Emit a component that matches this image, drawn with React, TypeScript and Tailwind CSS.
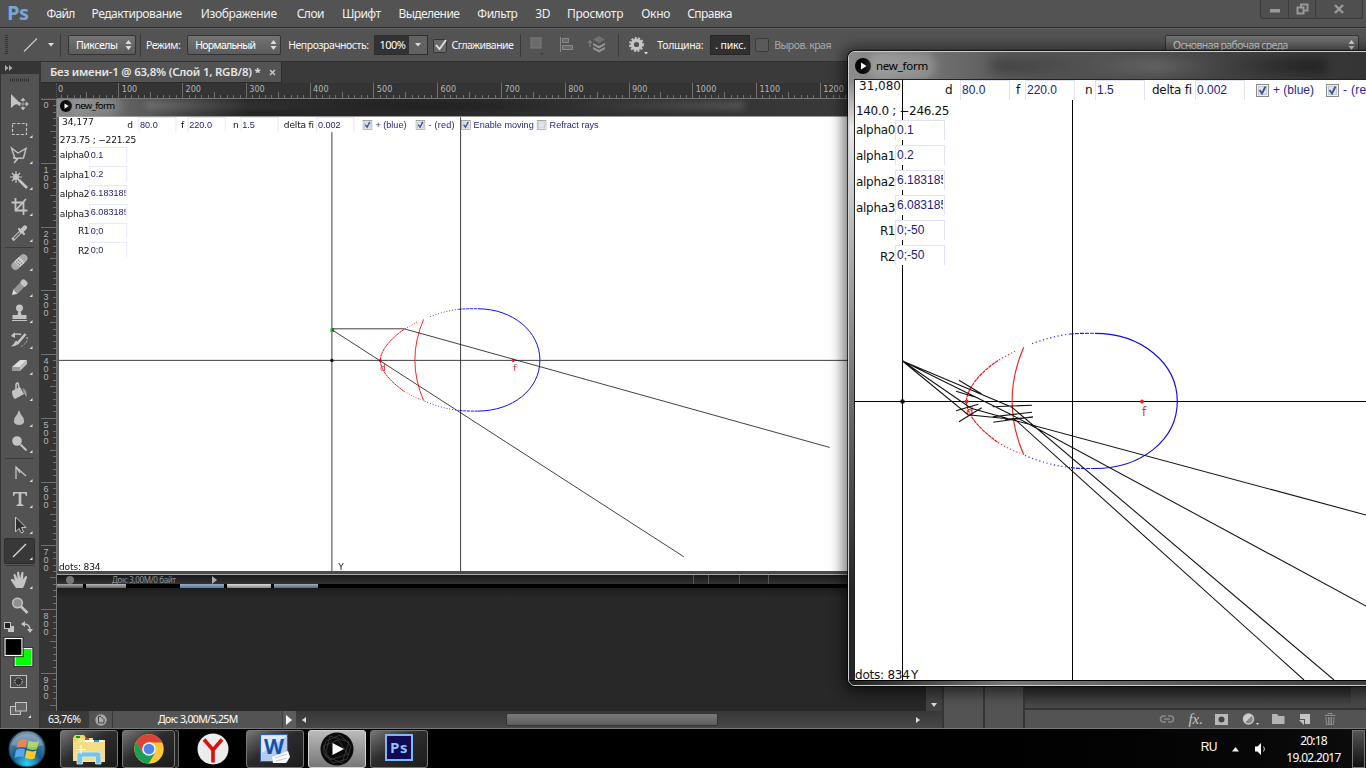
import React, { useLayoutEffect, useRef, useState } from "react";

/* Text spread to a known width through letter spacing. */
function T({ w, className = "", children }: { w: number; className?: string; children: string }) {
  const ref = useRef<HTMLSpanElement>(null);
  const [ls, setLs] = useState(0);
  useLayoutEffect(() => {
    if (ref.current) setLs((w - ref.current.offsetWidth) / children.length);
  }, []);
  return (
    <span ref={ref} className={"inline-block shrink-0 whitespace-pre " + className} style={{ letterSpacing: ls + "px" }}>
      {children}
    </span>
  );
}

const menu: [string, number, string][] = [
  ["Файл", 28, "ml-[18px]"],
  ["Редактирование", 90, "ml-[17px]"],
  ["Изображение", 76, "ml-[19px]"],
  ["Слои", 27, "ml-[20px]"],
  ["Шрифт", 38, "ml-[18px]"],
  ["Выделение", 61, "ml-[18px]"],
  ["Фильтр", 40, "ml-[18px]"],
  ["3D", 15, "ml-[18px]"],
  ["Просмотр", 56, "ml-[17px]"],
  ["Окно", 29, "ml-[18px]"],
  ["Справка", 45, "ml-[17px]"],
];

function MenuBar() {
  return (
    <div className="flex h-7 shrink-0 items-center border-b border-[#2c2c2c] bg-[#535353] text-[12px] text-[#f0f0f0]">
      <T w={22} className="ml-[7px] -mt-[2px] font-['Open_Sans'] text-[20px] leading-6 font-bold text-[#77a7d6]">Ps</T>
      {menu.map(([t, w, m]) => (
        <T key={t} w={w} className={m}>{t}</T>
      ))}
      <div className="mr-[3px] ml-auto flex h-[19px] self-start rounded-b-[3px] border border-t-0 border-[#3a3a3a] bg-[#4f4f4f]">
        <div className="flex w-[28px] items-center justify-center border-r border-[#3d3d3d]">
          <svg width="12" height="12"><rect x="1" y="6" width="10" height="3.5" fill="#999" /></svg>
        </div>
        <div className="flex w-[27px] items-center justify-center border-r border-[#3d3d3d]">
          <svg width="13" height="12" fill="none" stroke="#999" strokeWidth="2"><path d="M5 4V1.5H11.5V7.5H8M1.5 4.5H7.5V10.5H1.5Z" /></svg>
        </div>
        <div className="flex w-[46px] items-center justify-center">
          <svg width="12" height="12" stroke="#999" strokeWidth="2.4"><path d="M2 2L10 10M10 2L2 10" /></svg>
        </div>
      </div>
    </div>
  );
}

const UpDown = ({ className = "" }: { className?: string }) => (
  <svg className={className} width="7" height="10" fill="#ddd"><path d="M3.500 0L6.500 4H.5ZM3.500 10L.5 6H6.500Z" /></svg>
);
const Sep = ({ className }: { className: string }) => <div className={"h-[23px] w-px shrink-0 bg-[#3a3a3a] " + className} />;
const combo = "flex h-5 shrink-0 items-center rounded-[2px] border border-[#333] bg-linear-to-b from-[#737373] to-[#5b5b5b] text-white";

function OptionsBar() {
  return (
    <div className="flex h-[34px] shrink-0 items-center border-t border-b border-t-[#646464] border-b-[#303030] bg-[#535353] text-[10.5px] text-[#f4f4f4]">
      <svg className="ml-[5px] shrink-0" width="3" height="20" stroke="#333"><path d="M1.500 0V20" strokeWidth="3" strokeDasharray="1 1" /></svg>
      <svg className="ml-[15px] shrink-0" width="15" height="14" stroke="#c8c8c8" strokeWidth="1.300"><path d="M1 13.500L14 .5" /></svg>
      <svg className="ml-[10px] shrink-0" width="6" height="4" fill="#ddd"><path d="M0 0H6L3 3.500Z" /></svg>
      <Sep className="ml-[6px]" />
      <div className={combo + " ml-[7px] w-[68px]"}>
        <T w={42} className="ml-[7px]">Пикселы</T>
        <UpDown className="ml-[7px]" />
      </div>
      <Sep className="ml-[4px]" />
      <T w={34} className="ml-[5px]">Режим:</T>
      <div className={combo + " ml-[7px] w-[94px]"}>
        <T w={60} className="ml-[7px]">Нормальный</T>
        <UpDown className="ml-[15px]" />
      </div>
      <T w={80} className="ml-[7px]">Непрозрачность:</T>
      <div className="ml-[6px] flex h-5 w-[54px] shrink-0 items-center border border-[#2e2e2e] bg-[#323232] text-white">
        <T w={26} className="ml-[4px] text-[11px]">100%</T>
        <div className="ml-auto flex h-full w-[18px] items-center justify-center bg-[#626262]">
          <svg width="6" height="4" fill="#ddd"><path d="M0 0H6L3 3.500Z" /></svg>
        </div>
      </div>
      <svg className="ml-[5px] shrink-0" width="15" height="17" fill="none">
        <rect x=".5" y="2.500" width="13" height="13" rx="1" fill="#686868" stroke="#333" />
        <path d="M3 8L6.500 12L13 3" stroke="#e4e4e4" strokeWidth="1.800" />
      </svg>
      <T w={62} className="ml-[3px]">Сглаживание</T>
      <Sep className="ml-[7px]" />
      <svg className="ml-[8px] shrink-0" width="16" height="20"><rect x="2" y="3" width="10" height="10" fill="#6b6b6b" stroke="#7c7c7c" /><path d="M11 18H15L13 20Z" fill="#404040" /></svg>
      <svg className="ml-[13px] shrink-0" width="18" height="20" fill="#6a6a6a" stroke="#8a8a8a"><path d="M2.500 2V17" /><path d="M4.500 3.500H10.500V7.500H4.500ZM4.500 10.500H14.500V14.500H4.500Z" /></svg>
      <svg className="ml-[11px] shrink-0" width="20" height="20"><path d="M3 12V6M1 8L3 5.500L5 8" fill="none" stroke="#888" /><path d="M12 1L18 4.500L12 8L6 4.500Z" fill="#707070" /><path d="M6 8L12 11L18 8V10L12 13.500L6 10ZM6 12L12 15L18 12V14L12 17.500L6 14Z" fill="#949494" /></svg>
      <Sep className="ml-[11px]" />
      <svg className="ml-[9px] shrink-0" width="22" height="20">
        <circle cx="8.500" cy="9.500" r="4.300" fill="none" stroke="#c5c5c5" strokeWidth="3.400" />
        <circle cx="8.500" cy="9.500" r="6.500" fill="none" stroke="#c5c5c5" strokeWidth="2" strokeDasharray="2 1.500" />
        <path d="M16 17H20L18 19.500Z" fill="#ddd" />
      </svg>
      <T w={46} className="ml-[7px]">Толщина:</T>
      <div className="ml-[7px] flex h-5 w-[40px] shrink-0 items-center border border-[#262626] bg-[#303030]">
        <T w={31} className="ml-[4px] text-white">. пикс.</T>
      </div>
      <div className="ml-[5px] h-[14px] w-[14px] shrink-0 rounded-[2px] border border-[#3b3b3b] bg-[#5a5a5a]" />
      <T w={57} className="ml-[5px] text-[#a8a8a8]">Выров. края</T>
      <div className={combo + " mr-[7px] ml-auto w-[194px]"}>
        <T w={115} className="ml-[7px] text-[#ddd]">Основная рабочая среда</T>
        <UpDown className="mr-[3px] ml-auto" />
      </div>
    </div>
  );
}

const g = "#c4c4c4";
const tools: React.ReactNode[] = [
  <><path d="M3 3V17L7 13.500L13 13Z" fill={g} /><path d="M15 8V18M10 13H20M15 7L13 9.500H17ZM15 19L13 16.500H17ZM9.500 13L12 11V15ZM20.500 13L18 11V15Z" fill={g} stroke={g} strokeWidth=".6" /></>,
  <rect x="4.500" y="6.500" width="14" height="11" fill="none" stroke={g} strokeWidth="1.200" strokeDasharray="3 1.600" />,
  <><path d="M3.500 5L10 10L18 5.500L15.500 15L7 15.500Z" fill="none" stroke={g} strokeWidth="1.400" /><path d="M5 14.500L9.500 16L6 20" fill="none" stroke={g} strokeWidth="1.600" /></>,
  <><path d="M11 11L19 19" stroke={g} strokeWidth="2.600" /><path d="M8 2V14M2 8H14M4 4L12 12M12 4L4 12" stroke={g} strokeWidth="1.200" /><circle cx="8" cy="8" r="3" fill={g} /></>,
  <><path d="M7.500 3V15.500H19.500M3.500 7.500H15.500V20M7.500 15.500L18 4" fill="none" stroke={g} strokeWidth="1.800" /></>,
  <><path d="M4.500 19L12.500 11" stroke={g} strokeWidth="3.200" /><path d="M6 17.500L12 11.500" stroke="#5a5a5a" strokeWidth="1.400" /><path d="M11 8L16 13" stroke={g} strokeWidth="2.200" strokeLinecap="round" /><path d="M13.500 10L17 6.500" stroke={g} strokeWidth="4.400" strokeLinecap="round" /></>,
  <g transform="rotate(-43 11.500 12)"><rect x="2" y="8" width="19" height="8" rx="4" fill="#aaa" /><rect x="8" y="8" width="7" height="8" fill="#ccc" /><path d="M9 10H14M9 12H14M9 14H14" stroke="#555" strokeDasharray="1 1.500" /></g>,
  <g transform="rotate(-45 11 12)"><path d="M1 12L6 9V15Z" fill="#ddd" /><rect x="6" y="9" width="9" height="6" fill="#969696" /><rect x="15" y="8.500" width="6" height="7" rx="2" fill={g} /></g>,
  <><circle cx="11.500" cy="6" r="3.500" fill={g} /><path d="M10.500 8H12.500L13.500 13H18.500V17H4.500V13H9.500Z" fill={g} /><path d="M4 18.500H19" stroke={g} /></>,
  <><path d="M9 16L17.500 6" stroke={g} strokeWidth="2.600" /><path d="M3 18.500Q8 18.500 11 15L8 12.500Q6 16 3 18.500Z" fill={g} /><path d="M4 7.500Q8 5 13 6.500" fill="none" stroke={g} strokeWidth="1.500" /><path d="M3 8L7 4V10Z" fill={g} /><path d="M19 9Q20 15 13 18.500" fill="none" stroke={g} strokeDasharray="2 1.500" /></>,
  <><path d="M4 13L12 6H19L12 13Z" fill="#ddd" /><path d="M4 13H12V17H4Z" fill="#999" /><path d="M12 13L19 6V10L12 17Z" fill="#c0c0c0" /></>,
  <><path d="M4 11L12 7L16 14L7 19Q4 17 4 11Z" fill={g} /><path d="M8 12V5Q8 2.500 10 3L11 8" fill="none" stroke={g} strokeWidth="1.500" /><path d="M14 8Q19 9 19 17Q16 15 15 10Z" fill="#999" /></>,
  <path d="M11 4Q12 8 15.500 12Q18 19 11 19Q4 19 6.500 12Q10 8 11 4Z" fill="#bcbcbc" />,
  <><circle cx="9" cy="9" r="4.800" fill={g} /><path d="M12.500 12.500L18.500 18.500" stroke={g} strokeWidth="2" /></>,
  <><path d="M8 18V6L18 15M8 6L12 12" fill="none" stroke={g} strokeWidth="1.300" /></>,
  <><path d="M5 5H19V9H18L17 6.500H13.300V17L15.500 18V19H8.500V18L10.700 17V6.500H7L6 9H5Z" fill={g} /></>,
  <path d="M7.500 4V19L11 15.500L13.500 20L15.500 19L13.500 14.500H18Z" fill="#303030" stroke={g} />,
  <path d="M5 18L18 5" stroke="#ddd" strokeWidth="1.300" />,
  <path d="M8 20L3 12.500Q2.500 10 5 11L7 13L5.500 7Q6 5 7.500 6.500L9.500 11L9 4.500Q10 2.500 11.200 4.500L12 10.500L13.500 4.500Q15 3 15.500 5L15 11.500L17.500 8Q19.500 7.500 19 9.500L16.500 17L15 20Z" fill={g} />,
  <><circle cx="9.500" cy="9" r="4.800" fill="#8f8f8f" stroke={g} strokeWidth="1.500" /><path d="M13 12.500L19.500 19" stroke={g} strokeWidth="2.600" /></>,
];

function Tool({ i }: { i: number }) {
  const sel = i === 17;
  return (
    <div className={"-ml-px flex h-[26px] w-[31px] shrink-0 items-center justify-center rounded-[2px] " + (sel ? "border border-[#2e2e2e] bg-[#383838]" : "")}>
      <svg width="29" height="24" viewBox="-3 0 29 24" className="shrink-0">
        {tools[i]}
        {i !== 0 && i !== 19 && <path d="M24.500 18V21H21.500Z" fill="#ddd" />}
      </svg>
    </div>
  );
}

function Toolbar() {
  const range = (a: number, b: number) => Array.from({ length: b - a }, (_, k) => <Tool key={a + k} i={a + k} />);
  const line = <div className="my-px h-px w-[29px] shrink-0 bg-[#3b3b3b]" />;
  return (
    <div className="flex w-[39px] shrink-0 flex-col items-center border-l border-[#333] bg-[#535353] pr-px">
      <div className="-mr-px flex h-[12px] w-[38px] shrink-0 items-center bg-[#353535] pl-1">
        <svg width="8" height="6" fill="#aaa"><path d="M0 0L3.500 3L0 6ZM4 0L7.500 3L4 6Z" /></svg>
      </div>
      <svg className="mt-[4px] shrink-0" width="20" height="4"><path d="M0 2H20" stroke="#2e2e2e" strokeWidth="3" strokeDasharray="1 1" /></svg>
      <div className="h-[8px] shrink-0" />
      {range(0, 6)}
      {line}
      {range(6, 14)}
      {line}
      {range(14, 18)}
      {line}
      {range(18, 20)}
      <svg width="38" height="110" className="mt-px -ml-px shrink-0">
        <rect x="8" y="6" width="6" height="6" fill={g} /><rect x="4.500" y="2.500" width="6" height="6" fill="#222" stroke={g} />
        <path d="M24 4Q30 4 30 10" fill="none" stroke={g} strokeWidth="1.300" /><path d="M21 4L25 1V7ZM30 13L27 9H33Z" fill={g} />
        <rect x="15" y="28.500" width="17" height="17" fill="#0f0" stroke="#fff" /><rect x="14" y="27.500" width="19" height="19" fill="none" stroke="#333" />
        <rect x="5" y="18.500" width="17" height="17" fill="#000" stroke="#fff" strokeWidth="1.200" /><rect x="3.800" y="17.300" width="19.400" height="19.400" fill="none" stroke="#333" />
        <rect x="10.500" y="55.500" width="16" height="12" fill="#4a4a4a" stroke={g} /><circle cx="18.500" cy="61.500" r="3.700" fill="#333" stroke="#eee" strokeDasharray="1 1" />
        <rect x="10.500" y="86.500" width="10" height="8" fill="#666" stroke={g} /><rect x="15.500" y="82.500" width="11" height="8.500" fill="#666" stroke={g} />
        <path d="M31 95V98H28Z" fill="#ddd" />
      </svg>
    </div>
  );
}

const ticks = (n: number, start: number) => Array.from({ length: n }, (_, k) => Math.round(start + k * 6.377) + 0.5);

function RulerTop() {
  return (
    <svg width="870" height="16" className="block shrink-0 bg-[#343434]" shapeRendering="crispEdges">
      {ticks(128, -2.4).map((x, k) => (
        <path key={k} d={"M" + x + " 15V" + (k % 10 === 0 ? 0 : k % 5 === 0 ? 9 : 12)} stroke="#707070" />
      ))}
      <path d="M0 15.500H870" stroke="#777" />
      {Array.from({ length: 13 }, (_, k) => (
        <text key={k} x={1 + k * 63.77} y="9" fontSize="9" fill="#b5b5b5" className="font-['DejaVu_Sans_Condensed','DejaVu_Sans']">{k * 100}</text>
      ))}
    </svg>
  );
}

function RulerLeft() {
  return (
    <svg width="16" height="612" className="block shrink-0 bg-[#343434]" shapeRendering="crispEdges">
      {ticks(96, 0).map((y, k) => (
        <path key={k} d={"M15 " + y + "H" + (k % 10 === 0 ? 0 : k % 5 === 0 ? 9 : 12)} stroke="#707070" />
      ))}
      <path d="M15.500 0V612" stroke="#777" />
      {Array.from({ length: 10 }, (_, k) =>
        String(k * 100).split("").map((c, j) => (
          <text key={k + "-" + j} x="2.500" y={9 + k * 63.77 + j * 8 + (k ? 1 : 0)} fontSize="9" fill="#b5b5b5" className="font-['Liberation_Sans']">{c}</text>
        ))
      )}
    </svg>
  );
}

const Field = ({ v, className = "" }: { v: string; className?: string }) => (
  <div className={"h-5 w-[50px] shrink-0 border border-b-0 border-[#e1e1fb] bg-white px-px font-['Liberation_Sans'] text-[12px] leading-[18px] text-[#20207c] " + className}>
    <div className="w-[46px] overflow-hidden">{v}</div>
  </div>
);

function Check({ label, w, on, className = "" }: { label: string; w: number; on: boolean; className?: string }) {
  return (
    <div className={"flex shrink-0 items-center bg-white text-[#26268a] " + className}>
      <svg width="13" height="13" className="shrink-0">
        <rect x=".5" y=".5" width="12" height="12" fill="#f3f3f3" stroke="#8a8a8a" />
        <rect x="2.500" y="2.500" width="8" height="8" fill="#e2e6ec" stroke="#c4cad2" />
        {on && <path d="M3.500 6L6 9.500L9.500 2.500" fill="none" stroke="#3e5596" strokeWidth="1.900" />}
      </svg>
      <T w={w} className="ml-[4px] font-['Liberation_Sans'] text-[12px] leading-5">{label}</T>
    </div>
  );
}

const rows: [string, number, string][] = [
  ["alpha0", 39, "mt-0"],
  ["alpha1", 39, "mt-[12px]"],
  ["alpha2", 39, "mt-[12px]"],
  ["alpha3", 39, "mt-[12px]"],
  ["R1", 15, "mt-[9px]"],
  ["R2", 15, "mt-[12px]"],
];

/* Sketch canvas, 600 units high; dx shifts the lens drawing horizontally. */
function Sketch({ dx, info, pos, posW, r, rays, source, faint }: {
  dx: number; info: string; pos: string; posW: number; r: string; rays: string; source?: boolean; faint?: boolean;
}) {
  const axis = faint ? "#3c3c3c" : "#000";
  return (
    <div className="relative h-[600px] w-[1050px] overflow-hidden bg-white font-['DejaVu_Sans'] text-[12px] text-[#111]">
      <svg width="1050" height="600" className="block">
        <g transform={"translate(" + (dx - 855) + " -80)"}>
          <path d="M902.500 80V680M1072.500 80V680M400 401.500H2000" stroke={axis} strokeWidth={faint ? 1.3 : 1} />
          <g fill="none" strokeWidth={faint ? 1.3 : 1.15}>
            <path d="M1032 343.700C1045 339 1057 335.500 1070 334" stroke="#2222ff" strokeDasharray="1.200 2.600" />
            <path d="M1070 334C1078 333.300 1087 333.200 1095 333.300" stroke="#1a1af5" strokeDasharray="4 1" />
            <path d="M1095 333.300C1141 333.300 1177.300 363 1177.300 401.300C1177.300 440 1141 468.500 1095 468.500" stroke="#0a0af0" />
            <path d="M1095 468.500C1087 468.600 1078 468.500 1070 467.500" stroke="#1a1af5" strokeDasharray="4 1" />
            <path d="M1070 467.500C1056 466 1040 462 1024 455" stroke="#2222ff" strokeDasharray="1.200 2.600" />
            <path d="M1015 351.300C1010 353.700 1004 357 998 360.500" stroke="#ff2020" strokeDasharray="1.200 2.200" />
            <path d="M998 360.500C982 371 966.500 388 966.500 401.300C966.500 416 982 431 998 442.500" stroke="#f01010" strokeDasharray="3.500 .6" />
            <path d="M998 442.500C1006 447 1013 451 1020 453" stroke="#ff2020" strokeDasharray="1.200 2.200" />
            <path d="M1023.700 347.300Q1000.500 401 1023.700 454.700" stroke="#fa2020" />
          </g>
          <circle cx="902.500" cy="401.500" r="2.300" fill="#111" />
          <circle cx="966.500" cy="401.500" r="2" fill="#e22" />
          <circle cx="1142" cy="401.500" r="2" fill="#e22" />
          <text x="966" y="416" fill="#e33" fontSize="12" className="font-['DejaVu_Sans']">d</text>
          <text x="1142" y="416" fill="#e33" fontSize="12" className="font-['DejaVu_Sans']">f</text>
          {source && <rect x="900.500" y="359.500" width="5" height="4.500" fill="#00d030" />}
          <path d={rays} fill="none" stroke="#111" strokeWidth="1.050" />
          <text x="911" y="679" fill="#111" fontSize="12">Y</text>
        </g>
      </svg>
      <div className="absolute top-0 left-0 flex h-5 items-center">
        <div className="flex w-[105px] shrink-0 items-center">
          <T w={42} className="-mt-[8px] ml-[4px]">{info}</T>
          <span className="ml-[44px]">d</span>
        </div>
        <Field v="80.0" />
        <span className="w-[15px] shrink-0 pl-[6px]">f</span>
        <Field v="220.0" />
        <span className="w-[20px] shrink-0 pl-[10px]">n</span>
        <Field v="1.5" />
        <div className="w-[50px] shrink-0 pl-[7px]"><T w={40}>delta fi</T></div>
        <Field v="0.002" />
        <Check on label="+ (blue)" w={41} className="ml-[11px]" />
        <Check on label="- (red)" w={35} className="ml-[12px]" />
        <Check on label="Enable moving" w={79} className="ml-[8px]" />
        <Check on={false} label="Refract rays" w={65} className="ml-[4px]" />
      </div>
      <div className="absolute top-[24px] left-px flex flex-col leading-[14px]">
        <T w={posW} className="self-start">{pos}</T>
        <div className="-mt-px flex pt-[3px]">
          <div className="flex w-[39px] shrink-0 flex-col items-end pt-[3px]">
            {rows.map(([t, w, m]) => (
              <T key={t} w={w} className={m}>{t}</T>
            ))}
          </div>
          <div className="flex shrink-0 flex-col gap-[5px]">
            {["0.1", "0.2", "6.183185", "6.083185", r, r].map((v, i) => (
              <Field key={i} v={v} />
            ))}
          </div>
        </div>
      </div>
      <T w={55} className="absolute top-[588px] left-0 leading-[14px]">dots: 834</T>
    </div>
  );
}

const Play = ({ s }: { s: number }) => (
  <svg width={s} height={s} viewBox="0 0 16 16" className="shrink-0"><circle cx="8" cy="8" r="8" fill="#080808" /><path d="M6 4.500L11.500 8L6 11.500Z" fill="#fff" /></svg>
);

const bigRays =
  "M902.500 361L1012 407.300L1334 680M902.500 361L1012 415L1366 606M902.500 361L971 408.300L1013 420L1366 515M902.500 361L968 414.700L1015 419.500L1304 680" +
  "M959 380.300L981.700 394M956 391.300L978.300 398M956 410.700L978.300 404.300M959 421.700L981.700 407.700M992.700 406.700L1032 405.300M992.700 416.700L1032 412.300M993.300 422.300L1033 416.700M1005 419.300L1033 417.300";
const smallRays = "M902.500 359.800H998L1560 516.500M902.500 361L1367.500 661";

function Canvas() {
  return (
    <div className="relative flex h-[612px] w-[869px] shrink-0 flex-col overflow-hidden bg-[#282828]">
      <div className="flex h-[18px] shrink-0 items-center border-b border-[#999] bg-linear-to-r from-[#8a8a8a] via-[#242424] via-[22%] to-[#3c3c3c] pb-[4px] pl-[3px]">
        <Play s={12} />
        <div className="ml-[3px] flex rounded-full bg-white/15 shadow-[0_0_8px_6px_rgba(255,255,255,0.15)]">
          <T w={40} className="text-[9.5px] leading-[11px] text-black">new_form</T>
        </div>
        <div className="ml-[30px] h-[9px] w-[600px] rounded-full bg-linear-to-r from-white/15 via-black/20 to-white/15 blur-[3px]" />
      </div>
      <div className="h-[454px] shrink-0 overflow-hidden border-l-2 border-[#666]">
        <div className="h-[454px] w-[795px] origin-top-left scale-[0.757]">
          <Sketch dx={313} info="34,177" pos="273.75 ; −221.25" posW={101} r="0;0" rays={smallRays} source faint />
        </div>
      </div>
      <div className="h-[4px] shrink-0 border-b border-[#aaa] bg-[#4a4a4a]" />
      <div className="flex h-[9px] shrink-0 items-center overflow-hidden bg-linear-to-b from-[#181818] to-[#333] text-[8px] leading-[9px] text-[#909090]">
        <div className="ml-[9px] h-[8px] w-[8px] rounded-full bg-[#777]" />
        <T w={64} className="ml-[38px]">Док: 3,00М/0 байт</T>
        <svg className="ml-[36px]" width="6" height="8" fill="#aaa"><path d="M0 0L5 4L0 8Z" /></svg>
        <div className="ml-[475px] flex h-full gap-[14px]">
          <div className="w-px bg-[#555]" /><div className="w-px bg-[#555]" /><div className="ml-[16px] w-px bg-[#555]" /><div className="ml-[14px] w-px bg-[#555]" />
        </div>
      </div>
      <div className="flex h-[4px] shrink-0 bg-black">
        <div className="w-[26px] bg-linear-to-b from-[#aaa] to-[#555]" />
        <div className="ml-[3px] w-[40px] bg-linear-to-b from-[#bbb] to-[#666]" />
        <div className="ml-[54px] w-[44px] bg-linear-to-b from-[#9ab] to-[#4a7cb5]" />
        <div className="ml-[3px] w-[44px] bg-linear-to-b from-[#ddd] to-[#888]" />
        <div className="ml-[3px] w-[44px] bg-linear-to-b from-[#aaa] to-[#4d6d8c]" />
      </div>
      <div className="h-[10px] shrink-0 bg-linear-to-b from-[#1d1d1d] to-[#282828]" />
    </div>
  );
}

function StatusBar() {
  return (
    <div className="flex h-[17px] shrink-0 items-stretch bg-[#3a3a3a] text-[10.5px] leading-[16px] text-white">
      <div className="w-[48px] shrink-0 pl-[7px]"><T w={33}>63,76%</T></div>
      <div className="flex w-[23px] shrink-0 items-center justify-center bg-[#535353]">
        <svg width="12" height="12"><circle cx="6" cy="6" r="5.700" fill="#aaa" /><path d="M3.500 2.500H6L9 5.500V9H3.500Z" fill="none" stroke="#444" /></svg>
      </div>
      <div className="ml-px w-[169px] shrink-0 bg-[#535353] pl-[45px]"><T w={80}>Док: 3,00М/5,25М</T></div>
      <div className="ml-px flex w-[13px] shrink-0 items-center justify-center bg-[#5c5c5c]">
        <svg width="7" height="10" fill="#fff"><path d="M0 0L6 5L0 10Z" /></svg>
      </div>
      <div className="flex flex-1 items-center bg-linear-to-b from-[#383838] to-[#474747]">
        <svg className="ml-[6px]" width="4" height="6" fill="#ddd"><path d="M4 0V6L0 3Z" /></svg>
        <div className="ml-[200px] h-[13px] w-[212px] rounded-[2px] border border-[#333] bg-linear-to-b from-[#7a7a7a] to-[#5d5d5d]" />
        <svg className="mr-[22px] ml-auto" width="4" height="6" fill="#ddd"><path d="M0 0V6L4 3Z" /></svg>
      </div>
    </div>
  );
}

function Workspace() {
  return (
    <div className="flex h-[666px] shrink-0 gap-[2px] bg-[#353535]">
      <Toolbar />
      <div className="flex w-[901px] shrink-0 flex-col">
        <div className="flex h-[21px] shrink-0 bg-[#3a3a3a]">
          <div className="flex w-[241px] items-center border-r border-b border-[#2b2b2b] bg-[#535353]">
            <T w={210} className="ml-[9px] text-[11.5px] font-semibold text-[#e6e6e6]">Без имени-1 @ 63,8% (Слой 1, RGB/8) *</T>
            <svg className="ml-[9px]" width="7" height="7" stroke="#ccc" strokeWidth="1.400"><path d="M1 1L6 6M6 1L1 6" /></svg>
          </div>
        </div>
        <div className="flex h-[16px] shrink-0">
          <div className="w-[16px] border-r border-b border-dotted border-[#555] bg-[#343434]" />
          <RulerTop />
        </div>
        <div className="flex h-[612px] shrink-0">
          <RulerLeft />
          <Canvas />
          <div className="flex flex-1 flex-col justify-end bg-[#424242] pb-[4px]">
            <svg className="mx-auto" width="6" height="4" fill="#ddd"><path d="M0 0H6L3 4Z" /></svg>
          </div>
        </div>
        <StatusBar />
      </div>
      <div className="w-[39px] shrink-0 bg-[#535353]" />
      <div className="w-[38px] shrink-0 bg-[#535353]" />
      <div className="flex flex-1 flex-col justify-end bg-[#464646]">
        <div className="mr-[15px] h-[24px] bg-linear-to-b from-[#2b2b2b] to-[#4a4a4a]" />
        <div className="flex h-[20px] items-center justify-end gap-[13px] border-t-2 border-[#343434] bg-[#535353] pr-[30px]">
          <svg width="16" height="16" fill="none" stroke="#8a8a8a" strokeWidth="1.500"><path d="M7 5H4.500A3 3 0 0 0 4.500 11H7M9 5H11.500A3 3 0 0 1 11.500 11H9M5 8H11" /></svg>
          <span className="-mr-px font-['Liberation_Serif'] text-[15px] leading-4 text-[#c4c4c4] italic">fx.</span>
          <svg width="14" height="14"><rect y="2" width="13" height="11" fill="#b9b9b9" /><circle cx="6.500" cy="7.500" r="3" fill="#444" /></svg>
          <svg width="17" height="14"><circle cx="6.500" cy="7" r="5" fill="#888" stroke="#c4c4c4" strokeWidth="1.500" /><path d="M3 10.500A5 5 0 0 1 10 3.500Z" fill="#d0d0d0" /><path d="M14 11H17L15.500 13Z" fill="#ddd" /></svg>
          <svg width="13" height="14" fill="#b4b4b4"><path d="M0 2H5L6.500 4H12.500V12H0Z" /></svg>
          <svg width="13" height="14" fill="#c4c4c4"><path d="M2 2H12V12H7V7H2Z" /><path d="M1 8H6V13Z" /></svg>
          <svg width="12" height="14" fill="none" stroke="#8a8a8a"><path d="M0.500 3.500H11.500M4 3V1.500H8V3M2 5L2.500 12.500H9.500L10 5M4.500 5V12M6 5V12M7.500 5V12" /></svg>
        </div>
      </div>
    </div>
  );
}

function FloatingWindow() {
  return (
    <div className="absolute top-[51px] left-[848px] flex h-[635px] w-[530px] flex-col overflow-hidden rounded-[7px] border border-[#d0d0d0] bg-linear-to-b from-[#777] via-[#777] via-[9%] to-[#222] shadow-[0_0_0_1px_rgba(0,0,0,0.7),0_2px_14px_5px_rgba(0,0,0,0.55)]">
      <div className="flex h-[27px] shrink-0 items-center bg-linear-to-r from-[#8c8c8c] via-[#5a5a5a] via-[30%] to-[#333] pl-[6px]">
        <Play s={16} />
        <div className="ml-[5px] flex rounded-full bg-white/20 shadow-[0_0_9px_8px_rgba(255,255,255,0.2)]">
          <T w={52} className="text-[11.5px] leading-[14px] text-black">new_form</T>
        </div>
        <div className="ml-[60px] h-[16px] w-[340px] rounded-full bg-linear-to-r from-black/25 via-white/15 to-black/40 blur-[6px]" />
      </div>
      <div className="flex flex-1 overflow-hidden">
        <div className="w-[5px] shrink-0 bg-linear-to-b from-[#888] from-0% via-[#e8e8e8] via-[8%] to-[#262626] to-[85%]" />
        <div className="h-[602px] shrink-0 overflow-hidden border-t border-l border-[#222]">
          <Sketch dx={0} info="31,080" pos="140.0 ; −246.25" posW={93} r="0;-50" rays={bigRays} />
        </div>
      </div>
      <div className="h-[5px] shrink-0 border-t border-black bg-linear-to-r from-[#222] via-[#777] via-[30%] to-[#3c3c3c]" />
    </div>
  );
}

const btn = "flex h-[38px] shrink-0 items-center justify-center rounded-[3px] border border-[#777] bg-linear-to-br from-[#777] via-[#2c2c2c] via-[45%] to-[#1c1c1c]";

function Taskbar() {
  return (
    <div className="flex h-[40px] shrink-0 items-center border-t border-[#777] bg-linear-to-r from-black via-black to-[#0c0c0c] pt-px">
      <svg className="ml-[8px] shrink-0" width="38" height="38">
        <defs>
          <radialGradient id="orb" cx=".5" cy=".9" r=".9"><stop offset="0" stopColor="#2fd0f8" /><stop offset=".45" stopColor="#155a8c" /><stop offset="1" stopColor="#7b98ac" /></radialGradient>
        </defs>
        <circle cx="19" cy="19" r="18" fill="url(#orb)" stroke="#263f52" strokeWidth="1.200" />
        <path d="M10 11Q14 8 19 10L17.500 18Q13 16 8.500 18.500Z" fill="#e8622a" />
        <path d="M20.500 10.500Q26 13 31 11L29 19Q24 21 19 18.500Z" fill="#9bc84a" />
        <path d="M8 20Q13 17.500 17 19.500L15.500 27Q11 25.500 6.500 28Z" fill="#58a8e8" />
        <path d="M18.500 20Q24 22.500 28.500 20.500L26.500 28.500Q22 30 17 28Z" fill="#fbc92e" />
        <path d="M3 15A17 17 0 0 1 35 15Q19 20 3 15Z" fill="#fff" opacity=".22" />
      </svg>
      <div className={btn + " ml-[14px] w-[58px]"}>
        <svg width="34" height="34">
          <path d="M1 29V6L3 3H12L14 6H21V29Z" fill="#eed36a" />
          <path d="M5 30V9L8 6H19L21 8H33V30Z" fill="#f8e694" />
          <path d="M1 10H33V29H1Z" fill="#f6dd84" />
          <path d="M13 8H31V10H13Z" fill="#fff" />
          <path d="M4 4H8V6H4Z" fill="#0a0" /><path d="M13 6H17V8H13Z" fill="#c42" /><path d="M22 8H27V10H22Z" fill="#29c" />
          <path d="M5 32V23Q5 20 8 20H26Q29 20 29 23V32H23.500V25H10.500V32Z" fill="#79c4e4" stroke="#d5f1fb" strokeWidth=".8" />
          <path d="M9 13V22M4.500 17.500H13.500" stroke="#fff" />
        </svg>
      </div>
      <div className={btn + " ml-[4px] w-[53px]"}>
        <svg width="30" height="30" viewBox="0 0 30 30">
          <circle cx="15" cy="15" r="14.700" fill="#fbc93a" />
          <path d="M15 15L15 .3A14.700 14.700 0 0 1 28.200 8.500H15L9 19L2 8A14.700 14.700 0 0 1 15 .3Z" fill="#dc4437" />
          <path d="M2.200 8L9 19L15 21L21 19L14.500 29.700A14.700 14.700 0 0 1 2.200 8Z" fill="#1c9e58" />
          <circle cx="15" cy="15" r="6.800" fill="#f5f5f5" /><circle cx="15" cy="15" r="5.300" fill="#4a86ee" />
        </svg>
      </div>
      <div className="h-[38px] w-[4px] rounded-r-[3px] border border-l-0 border-[#666] bg-[#222]" />
      <svg className="ml-[18px] shrink-0" width="32" height="32">
        <circle cx="16" cy="16" r="15.500" fill="#ededed" /><path d="M7 6.500L16 17L25 6.500M16 16V29.500" fill="none" stroke="#d91010" strokeWidth="3.600" />
      </svg>
      <div className={btn + " ml-[17px] w-[58px]"}>
        <svg width="32" height="32">
          <rect x="1.500" y="1.500" width="27" height="27" fill="#dce9f8" stroke="#2a60b0" strokeWidth="1.200" />
          <path d="M3 20L28 3V28H3Z" fill="#b4cdec" />
          <text x="5" y="21" fontSize="21" fontWeight="700" fill="#1550ac" textLength="20" lengthAdjust="spacingAndGlyphs" className="font-['Open_Sans']">W</text>
          <path d="M13 24L29 18L31 24L27 30H14Z" fill="#fff" /><path d="M16 25L28 21M17 28L28 25" stroke="#bcc9dc" />
        </svg>
      </div>
      <div className="ml-[4px] flex h-[38px] w-[58px] shrink-0 items-center justify-center rounded-[3px] border border-[#d5d5d5] bg-linear-to-b from-[#bbb] to-[#777]">
        <svg width="34" height="34">
          <circle cx="17" cy="17" r="16.500" fill="#0a0a0a" />
          <path d="M6 9L20 3L31 14L27 27L13 31L3 20ZM3 14L18 8L28 22L10 28ZM10 4L29 10L22 31L5 24Z" fill="none" stroke="#444" strokeWidth=".7" />
          <path d="M12.500 11L24 17L12.500 23Z" fill="#fff" />
        </svg>
      </div>
      <div className={btn + " ml-[4px] w-[58px]"}>
        <div className="-mt-[4px] flex h-[27px] w-[28px] items-center justify-center border-2 border-[#7db8f4] bg-[#120a52] font-['Open_Sans'] text-[15px] leading-none font-bold text-[#8fc4fb]">
          <T w={18}>Ps</T>
        </div>
      </div>
      <div className="ml-auto flex h-full shrink-0 items-center text-[12px] text-white">
        <T w={16} className="-mt-[5px] font-['Liberation_Sans']">RU</T>
        <svg className="ml-[15px]" width="7" height="5" fill="#eee"><path d="M3.500 0L7 4.500H0Z" /></svg>
        <svg className="ml-[15px]" width="14" height="14"><path d="M1 4.500H3.500L7 1V13L3.500 9.500H1Z" fill="#fff" /><path d="M9.500 4.500Q11.500 7 9.500 9.500" fill="none" stroke="#ccc" /></svg>
        <div className="ml-[18px] flex w-[55px] flex-col items-center leading-[17px]">
          <T w={27}>20:18</T>
          <T w={54}>19.02.2017</T>
        </div>
        <div className="mr-px ml-[11px] h-[38px] w-[13px] border border-[#777] bg-linear-to-b from-[#555] to-[#111]" />
      </div>
    </div>
  );
}

export default function App() {
  return (
    <div className="relative flex h-[768px] w-[1366px] flex-col overflow-hidden bg-[#535353] font-['Noto_Sans',sans-serif] leading-4">
      <MenuBar />
      <OptionsBar />
      <Workspace />
      <Taskbar />
      <FloatingWindow />
    </div>
  );
}
